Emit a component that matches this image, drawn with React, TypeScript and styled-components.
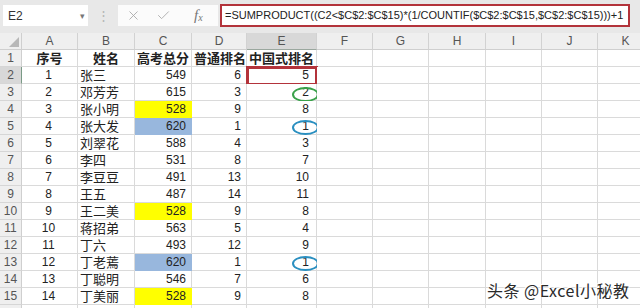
import styled, { createGlobalStyle } from 'styled-components'
import { X, Check } from 'lucide-react'

type Fill = 'yellow' | 'blue' | undefined
type Mark = 'green' | 'blue' | undefined

type Row = {
  no: number
  name: string
  score: number
  rank: number
  cn: number
  fill?: Fill
  mark?: Mark
}

const rows: Row[] = [
  { no: 1, name: '张三', score: 549, rank: 6, cn: 5 },
  { no: 2, name: '邓芳芳', score: 615, rank: 3, cn: 2, mark: 'green' },
  { no: 3, name: '张小明', score: 528, rank: 9, cn: 8, fill: 'yellow' },
  { no: 4, name: '张大发', score: 620, rank: 1, cn: 1, fill: 'blue', mark: 'blue' },
  { no: 5, name: '刘翠花', score: 588, rank: 4, cn: 3 },
  { no: 6, name: '李四', score: 531, rank: 8, cn: 7 },
  { no: 7, name: '李豆豆', score: 491, rank: 13, cn: 10 },
  { no: 8, name: '王五', score: 487, rank: 14, cn: 11 },
  { no: 9, name: '王二美', score: 528, rank: 9, cn: 8, fill: 'yellow' },
  { no: 10, name: '蒋招弟', score: 563, rank: 5, cn: 4 },
  { no: 11, name: '丁六', score: 493, rank: 12, cn: 9 },
  { no: 12, name: '丁老蔫', score: 620, rank: 1, cn: 1, fill: 'blue', mark: 'blue' },
  { no: 13, name: '丁聪明', score: 546, rank: 7, cn: 6 },
  { no: 14, name: '丁美丽', score: 528, rank: 9, cn: 8, fill: 'yellow' },
]

const letters = ['A', 'B', 'C', 'D', 'E', 'F', 'G', 'H', 'I', 'J', 'K']
const emptyCols = 6

const GlobalStyle = createGlobalStyle`
  body {
    margin: 0;
    background: #fff;
    font-family: "Liberation Sans", "Noto Sans CJK SC", sans-serif;
    overflow: hidden;
  }
`

const App = () => {
  return (
    <Page>
      <GlobalStyle />
      <TopBar>
        <NameBox>
          <span>E2</span>
          <Caret>▾</Caret>
        </NameBox>
        <Dots>⋮</Dots>
        <FxBox>
          <X size={15} strokeWidth={1.4} color="#a8a8a8" />
          <Check size={15} strokeWidth={1.4} color="#a8a8a8" />
          <FxLabel>
            f<sub>x</sub>
          </FxLabel>
        </FxBox>
        <FormulaBox>
          =SUMPRODUCT((C2&lt;$C$2:$C$15)*(1/COUNTIF($C$2:$C$15,$C$2:$C$15)))+1
        </FormulaBox>
      </TopBar>

      <Sheet>
        <Corner>
          <svg width="10" height="10" viewBox="0 0 10 10">
            <polygon points="10,0 10,10 0,10" fill="#b8b8b8" />
          </svg>
        </Corner>
        {letters.map((l) => (
          <ColHead key={l} $active={l === 'E'}>
            {l}
          </ColHead>
        ))}

        <RowHead>1</RowHead>
        <TextCell $align="center" $bold>序号</TextCell>
        <TextCell $align="center" $bold>姓名</TextCell>
        <TextCell $align="center" $bold>高考总分</TextCell>
        <TextCell $align="center" $bold>普通排名</TextCell>
        <TextCell $align="center" $bold>中国式排名</TextCell>
        {Array.from({ length: emptyCols }).map((_, i) => (
          <Cell key={i} />
        ))}

        {rows.map((r, idx) => (
          <SheetRow key={r.no} row={r} index={idx + 2} />
        ))}

        {/* row 16 only peeks in at the bottom edge */}
        <RowHead />
        {letters.map((l) => (
          <Cell key={l} />
        ))}

        <Watermark>头条 @Excel小秘教</Watermark>
      </Sheet>
    </Page>
  )
}

const SheetRow = ({ row, index }: { row: Row; index: number }) => (
  <>
    <RowHead $active={index === 2}>{index}</RowHead>
    <Cell $align="center">{row.no}</Cell>
    <TextCell $align="left">{row.name}</TextCell>
    <Cell $align="right" $fill={row.fill}>
      {row.score}
    </Cell>
    <Cell $align="right">{row.rank}</Cell>
    <Cell $align="right" $pad={7}>
      {row.cn}
      {index === 2 && <SelectBox />}
      {row.mark && <Ring $color={row.mark} />}
    </Cell>
    {Array.from({ length: emptyCols }).map((_, i) => (
      <Cell key={i} />
    ))}
  </>
)

const Page = styled.div`
  width: 640px;
  height: 308px;
  overflow: hidden;
  background: #fff;
`

const TopBar = styled.div`
  height: 33px;
  box-sizing: border-box;
  padding-top: 5px;
  background: #e8e8e8;
  display: flex;
  align-items: flex-start;
`

const NameBox = styled.div`
  margin-left: 3px;
  width: 85px;
  height: 21px;
  box-sizing: border-box;
  background: #fff;
  display: flex;
  align-items: center;
  justify-content: space-between;
  padding: 0 3px 0 5px;
  font-size: 12px;
  color: #333;
`

const Caret = styled.span`
  font-size: 9px;
  color: #777;
`

const Dots = styled.div`
  width: 30px;
  height: 21px;
  display: flex;
  align-items: center;
  justify-content: center;
  color: #b5b5b5;
  font-size: 13px;
`

const FxBox = styled.div`
  width: 100px;
  height: 21px;
  background: #fbfbfb;
  display: flex;
  align-items: center;
  gap: 15px;
  padding-left: 8px;
  box-sizing: border-box;
`

const FxLabel = styled.span`
  font-family: "Liberation Serif", serif;
  font-style: italic;
  font-size: 15px;
  color: #777;
  margin-left: 8px;
  line-height: 1;

  sub {
    font-size: 10px;
    vertical-align: -1px;
  }
`

const FormulaBox = styled.div`
  margin-left: 2px;
  margin-top: -1px;
  width: 410px;
  height: 23px;
  box-sizing: border-box;
  border: 2.5px solid #b3333b;
  background: #fff;
  padding-left: 3px;
  font-size: 11px;
  line-height: 18px;
  color: #222;
  white-space: nowrap;
  overflow: hidden;
`

const Sheet = styled.div`
  position: relative;
  display: grid;
  grid-template-columns: 22px 56px 57px 57px 55px 70px 56px 56px 57px 56px 56px 56px;
  grid-auto-rows: 17px;
`

const Corner = styled.div`
  background: #efefef;
  border-right: 1px solid #cfcfcf;
  border-bottom: 1px solid #cfcfcf;
  box-sizing: border-box;
  display: flex;
  align-items: flex-end;
  justify-content: flex-end;
  padding: 0 2px 2px 0;
`

const ColHead = styled.div<{ $active?: boolean }>`
  background: ${(p) => (p.$active ? '#d8d8d8' : '#efefef')};
  border-right: 1px solid #d2d2d2;
  border-bottom: 1px solid ${(p) => (p.$active ? '#9aa79e' : '#cfcfcf')};
  box-sizing: border-box;
  text-align: center;
  font-size: 12px;
  line-height: 17px;
  color: #555;
`

const RowHead = styled.div<{ $active?: boolean }>`
  background: ${(p) => (p.$active ? '#d8d8d8' : '#efefef')};
  border-right: 1px solid ${(p) => (p.$active ? '#7a9a86' : '#cfcfcf')};
  border-bottom: 1px solid #d6d6d6;
  box-sizing: border-box;
  text-align: center;
  font-size: 12px;
  line-height: 17px;
  color: #555;
`

const fills = {
  yellow: '#ffff00',
  blue: '#98b7dd',
}

const Cell = styled.div<{
  $align?: 'left' | 'center' | 'right'
  $fill?: Fill
  $bold?: boolean
  $pad?: number
}>`
  position: relative;
  background: ${(p) => (p.$fill ? fills[p.$fill] : '#fff')};
  border-right: 1px solid ${(p) => (p.$fill ? fills[p.$fill] : '#dadada')};
  border-bottom: 1px solid ${(p) => (p.$fill ? fills[p.$fill] : '#dadada')};
  box-sizing: border-box;
  text-align: ${(p) => p.$align || 'left'};
  padding: 0 ${(p) => p.$pad ?? 5}px 0 3px;
  font-size: 12px;
  font-weight: ${(p) => (p.$bold ? 700 : 400)};
  line-height: 17px;
  color: #222;
  white-space: nowrap;
`

const TextCell = styled(Cell)`
  font-size: 13px;
  padding: 0 2px;
  overflow: visible;
`

const SelectBox = styled.div`
  position: absolute;
  left: -1px;
  top: -1px;
  width: 72px;
  height: 20px;
  box-sizing: border-box;
  border: 3px solid #b3333b;
  pointer-events: none;
`

const Ring = styled.div<{ $color: 'green' | 'blue' }>`
  position: absolute;
  left: 45px;
  top: ${(p) => (p.$color === 'green' ? 3 : 2)}px;
  width: 27px;
  height: 15px;
  box-sizing: border-box;
  border: 2px solid ${(p) => (p.$color === 'green' ? '#3aa14a' : '#2a8fc0')};
  border-radius: 50%;
`

const Watermark = styled.div`
  position: absolute;
  left: 487px;
  top: 247px;
  font-family: "Noto Sans CJK SC", sans-serif;
  font-size: 16px;
  line-height: 20px;
  color: #2a2a2a;
  text-shadow: 0 0 2px #fff, 1px 1px 0 #fff, -1px -1px 0 #fff;
  letter-spacing: 0.5px;
  white-space: nowrap;
`

export default App
